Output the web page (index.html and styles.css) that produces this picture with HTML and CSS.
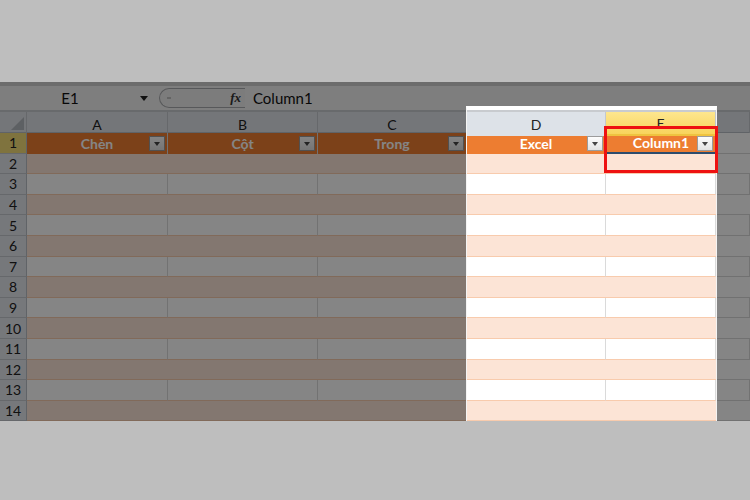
FILE: index.html
```html
<!DOCTYPE html>
<html lang="vi">
<head>
    <meta charset="UTF-8">
    <title>Excel - Column1</title>
    <link rel="stylesheet" href="styles.css">
</head>
<body>
    <div class="shot">
        <div class="topline"></div>

        <!-- thanh công thức -->
        <div class="fbar">
            <div class="namebox">
                <span class="name">E1</span>
                <span class="caret"></span>
            </div>
            <div class="pill">
                <span class="dot"></span>
                <span class="fx">fx</span>
            </div>
            <div class="formula">Column1</div>
        </div>

        <!-- bảng tính -->
        <div class="sheet">
            <div class="row colhead">
                <div class="corner">
                    <svg width="27" height="21" viewBox="0 0 27 21"><polygon points="24,5 24,18 11,18" fill="#b3b8be"/></svg>
                </div>
                <div>A</div><div>B</div><div>C</div><div class="hd">D</div><div class="hsel">E</div><div></div>
            </div>
            <div class="row thead">
                <div class="rh rsel">1</div>
                <div class="th">Chèn<span class="fbtn"></span></div>
                <div class="th">Cột<span class="fbtn"></span></div>
                <div class="th">Trong<span class="fbtn"></span></div>
                <div class="th">Excel<span class="fbtn"></span></div>
                <div class="th active">Column1<span class="fbtn"></span></div>
                <div class="f"></div>
            </div>
            <div class="row band"><div class="rh">2</div><div></div><div></div><div></div><div></div><div></div><div class="f"></div></div>
            <div class="row plain"><div class="rh">3</div><div></div><div></div><div></div><div></div><div></div><div class="f"></div></div>
            <div class="row band"><div class="rh">4</div><div></div><div></div><div></div><div></div><div></div><div class="f"></div></div>
            <div class="row plain"><div class="rh">5</div><div></div><div></div><div></div><div></div><div></div><div class="f"></div></div>
            <div class="row band"><div class="rh">6</div><div></div><div></div><div></div><div></div><div></div><div class="f"></div></div>
            <div class="row plain"><div class="rh">7</div><div></div><div></div><div></div><div></div><div></div><div class="f"></div></div>
            <div class="row band"><div class="rh">8</div><div></div><div></div><div></div><div></div><div></div><div class="f"></div></div>
            <div class="row plain"><div class="rh">9</div><div></div><div></div><div></div><div></div><div></div><div class="f"></div></div>
            <div class="row band"><div class="rh">10</div><div></div><div></div><div></div><div></div><div></div><div class="f"></div></div>
            <div class="row plain"><div class="rh">11</div><div></div><div></div><div></div><div></div><div></div><div class="f"></div></div>
            <div class="row band"><div class="rh">12</div><div></div><div></div><div></div><div></div><div></div><div class="f"></div></div>
            <div class="row plain"><div class="rh">13</div><div></div><div></div><div></div><div></div><div></div><div class="f"></div></div>
            <div class="row band"><div class="rh">14</div><div></div><div></div><div></div><div></div><div></div><div class="f"></div></div>
        </div>

        <!-- vùng sáng + khung đỏ -->
        <div class="spot"></div>
        <div class="mark"></div>
    </div>
</body>
</html>
```

FILE: styles.css
```css
body {
    margin: 0;
    background: #bebebe;
    font-family: Lato, "Liberation Sans", sans-serif;
}

.shot {
    margin-top: 82px;
    height: 339px;
    position: relative;
    overflow: hidden;
    background: #fff;
}

.topline {
    height: 4px;
    background: #cfcfcf;
}

/* formula bar */
.fbar {
    height: 24px;
    display: flex;
    align-items: center;
    background: #f1f1f1;
    border-bottom: 2px solid #c8cbcf;
    font-size: 15px;
    color: #111;
}

.namebox {
    width: 159px;
    display: flex;
    align-items: center;
}

.name {
    width: 140px;
    text-align: center;
}

.caret {
    width: 0;
    height: 0;
    border-left: 4px solid transparent;
    border-right: 4px solid transparent;
    border-top: 5px solid #222;
}

.pill {
    width: 86px;
    height: 20px;
    box-sizing: border-box;
    display: flex;
    align-items: center;
    justify-content: space-between;
    padding: 0 4px 0 7px;
    border: 1px solid #a7a9ac;
    border-right: none;
    border-radius: 11px 0 0 11px;
    background: #eeeeee;
}

.dot {
    width: 4px;
    height: 2px;
    background: #c0c0c0;
}

.fx {
    font-family: "Liberation Serif", serif;
    font-style: italic;
    font-weight: bold;
    font-size: 13px;
    color: #333;
}

.formula {
    margin-left: 8px;
}

/* sheet */
.row {
    display: grid;
    grid-template-columns: 27px 141px 150px 149px 139px 110px 1fr;
    height: 20.6px;
    box-sizing: border-box;
    font-size: 14px;
}

.row > div {
    box-sizing: border-box;
}

.colhead {
    height: 21px;
    background: #dfe3e9;
    color: #222;
    border-bottom: 1px solid #b9bec5;
}

.colhead > div {
    display: flex;
    align-items: center;
    justify-content: center;
    border-right: 1px solid #c3c8ce;
}

.colhead .corner {
    display: block;
}

.colhead .hd {
    background: #dde2e8;
}

.colhead .hsel {
    background: linear-gradient(#fde68e, #f8d45c);
    border-bottom: 2px solid #efc33f;
}

.rh {
    display: flex;
    align-items: center;
    justify-content: center;
    background: #e3e6eb;
    color: #222;
    border-bottom: 1px solid #c3c8ce;
    border-right: 1px solid #b9bec5;
}

.rh.rsel {
    background: #f4dc78;
}

/* table header */
.thead {
    background: #ed7d31;
}

.th {
    position: relative;
    display: flex;
    align-items: center;
    justify-content: center;
    color: #fff;
    font-weight: bold;
    border-right: 1px solid #d9d9d9;
}

.th.active {
    border-left: 1px solid #2c4c6e;
    border-bottom: 2px solid #2c4c6e;
}

.fbtn {
    position: absolute;
    right: 2px;
    top: 3px;
    width: 16px;
    height: 15px;
    box-sizing: border-box;
    border: 1px solid #9c9c9c;
    background: linear-gradient(#fdfdfd, #e2e2e2);
}

.fbtn::after {
    content: "";
    position: absolute;
    left: 3.5px;
    top: 4.5px;
    border-left: 3.5px solid transparent;
    border-right: 3.5px solid transparent;
    border-top: 4px solid #444;
}

.row .f {
    background: #fff;
    border-bottom: 1px solid #d9d9d9;
    border-left: 1px solid #d9d9d9;
}

.band > div {
    background: #fce4d6;
    border-bottom: 1px solid #f8cbad;
}

.plain > div {
    background: #fff;
    border-right: 1px solid #dadada;
    border-bottom: 1px solid #f8cbad;
}

.band > .rh,
.plain > .rh {
    background: #e3e6eb;
    border-bottom: 1px solid #c3c8ce;
    border-right: 1px solid #b9bec5;
}

/* dimmed overlay with cut-out */
.spot {
    position: absolute;
    left: 466px;
    top: 24px;
    width: 251px;
    bottom: 0;
    box-sizing: border-box;
    border-top: 4px solid #fff;
    border-left: 1px solid #f4f4f4;
    border-right: 1px solid #f4f4f4;
    box-shadow: 0 0 0 1200px rgba(0, 0, 0, 0.48);
}

.mark {
    position: absolute;
    left: 604px;
    top: 44px;
    width: 114px;
    height: 47px;
    box-sizing: border-box;
    border: 3px solid #ee1111;
}
```
